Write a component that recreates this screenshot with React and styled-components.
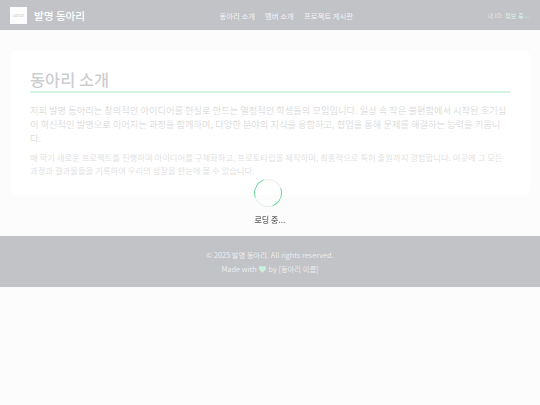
import React from "react";
import styled, { createGlobalStyle } from "styled-components";

const GlobalStyle = createGlobalStyle`
  html, body {
    margin: 0;
    padding: 0;
    background: #f5f6f7;
    font-family: "Noto Sans CJK KR", "Noto Sans", sans-serif;
  }
  * { box-sizing: border-box; }
`;

const Page = styled.div`
  min-height: 405px;
  display: flex;
  flex-direction: column;
`;

const Header = styled.header`
  height: 30px;
  background: #333645;
  display: flex;
  justify-content: space-between;
  align-items: center;
  padding: 0 10px;
`;

const Brand = styled.div`
  display: flex;
  align-items: center;
  gap: 7px;
`;

const Logo = styled.div`
  width: 17px;
  height: 17px;
  background: #f4f4f4;
  color: #555;
  display: flex;
  align-items: center;
  justify-content: center;
  font-size: 3.2px;
  letter-spacing: 0.4px;
  font-weight: 700;
`;

const BrandName = styled.span`
  color: #fff;
  font-size: 10.6px;
  font-weight: 500;
`;

const Nav = styled.nav`
  display: flex;
  gap: 10px;
`;

const NavLink = styled.a`
  color: #dcdde1;
  font-size: 7.4px;
  font-weight: 400;
`;

const UserInfo = styled.div`
  font-size: 6px;
  letter-spacing: 0.3px;
  color: #a9adb5;
`;

const Accent = styled.span`
  color: #7fe0a8;
`;

const Main = styled.main`
  padding: 20px 10px 41px;
`;

const Card = styled.section`
  background: #fff;
  border-radius: 7px;
  padding: 18px 20px 20px;
  height: 145px;
`;

const Title = styled.h1`
  margin: 0 0 10px;
  padding-bottom: 1px;
  color: #55595f;
  font-size: 16.4px;
  line-height: 22px;
  font-weight: 500;
  border-bottom: 2px solid #74d9a3;
`;

const Lead = styled.p`
  margin: 0 0 6px;
  color: #8a8a8a;
  font-size: 9.25px;
  line-height: 14px;
`;

const Detail = styled.p`
  margin: 0;
  color: #969696;
  font-size: 8.35px;
  line-height: 13px;
`;

const Footer = styled.footer`
  height: 51px;
  background: #333645;
  color: #c4c6cc;
  font-size: 7.3px;
  display: flex;
  flex-direction: column;
  align-items: center;
  justify-content: center;
  gap: 4px;
`;

const FootLine = styled.div`
  line-height: 10px;
`;

const Heart = styled.span`
  color: #4fce8a;
  font-size: 8.5px;
  line-height: 8px;
`;

const Overlay = styled.div`
  position: fixed;
  inset: 0;
  background: rgba(255, 255, 255, 0.7);
  backdrop-filter: blur(0.65px);
  display: flex;
  flex-direction: column;
  align-items: center;
  justify-content: center;
  gap: 7px;
`;

const Spinner = styled.div`
  width: 28px;
  height: 28px;
  margin-left: -5px;
  border-radius: 50%;
  border: 1px solid #e6eeea;
  border-right-color: #6dd79c;
  border-left-color: #6dd79c;
  transform: rotate(25deg);
`;

const LoadingText = styled.div`
  color: #666;
  font-size: 8px;
  font-weight: 500;
  line-height: 12px;
  filter: blur(0.3px);
`;

export default function App() {
  return (
    <Page>
      <GlobalStyle />
      <Header>
        <Brand>
          <Logo>LOGO</Logo>
          <BrandName>발명 동아리</BrandName>
        </Brand>
        <Nav>
          <NavLink>동아리 소개</NavLink>
          <NavLink>멤버 소개</NavLink>
          <NavLink>프로젝트 게시판</NavLink>
        </Nav>
        <UserInfo>
          내 ID: <Accent>정보 중</Accent>...
        </UserInfo>
      </Header>
      <Main>
        <Card>
          <Title>동아리 소개</Title>
          <Lead>
            저희 발명 동아리는 창의적인 아이디어를 현실로 만드는 열정적인 학생들의 모임입니다. 일상 속 작은 불편함에서 시작된 호기심이 혁신적인 발명으로 이어지는 과정을 함께하며, 다양한 분야의 지식을 융합하고, 협업을 통해 문제를 해결하는 능력을 키웁니다.
          </Lead>
          <Detail>
            매 학기 새로운 프로젝트를 진행하며 아이디어를 구체화하고, 프로토타입을 제작하며, 최종적으로 특허 출원까지 경험합니다. 이곳에 그 모든 과정과 결과물들을 기록하여 우리의 성장을 한눈에 볼 수 있습니다.
          </Detail>
        </Card>
      </Main>
      <Footer>
        <FootLine>© 2025 발명 동아리. All rights reserved.</FootLine>
        <FootLine>
          Made with <Heart>♥</Heart> by [동아리 이름]
        </FootLine>
      </Footer>
      <Overlay>
        <Spinner />
        <LoadingText>로딩 중...</LoadingText>
      </Overlay>
    </Page>
  );
}
